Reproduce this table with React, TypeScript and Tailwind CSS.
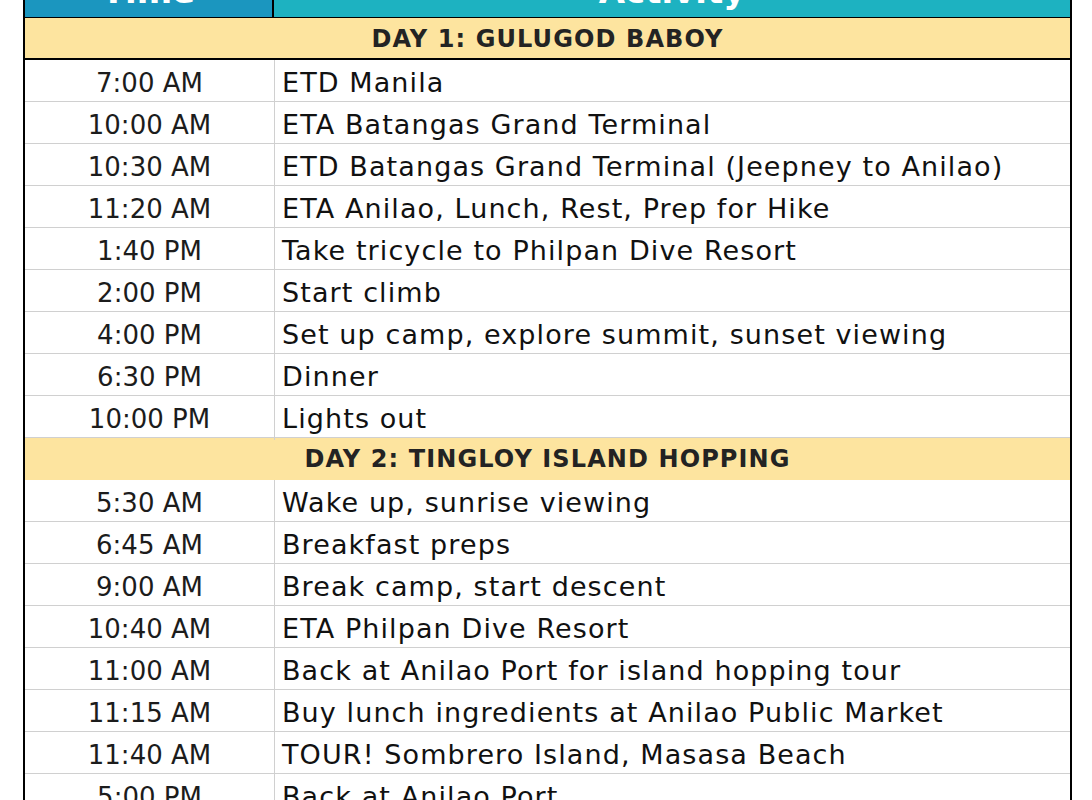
const day1 = [
  ['7:00 AM', 'ETD Manila'],
  ['10:00 AM', 'ETA Batangas Grand Terminal'],
  ['10:30 AM', 'ETD Batangas Grand Terminal (Jeepney to Anilao)'],
  ['11:20 AM', 'ETA Anilao, Lunch, Rest, Prep for Hike'],
  ['1:40 PM', 'Take tricycle to Philpan Dive Resort'],
  ['2:00 PM', 'Start climb'],
  ['4:00 PM', 'Set up camp, explore summit, sunset viewing'],
  ['6:30 PM', 'Dinner'],
  ['10:00 PM', 'Lights out'],
];

const day2 = [
  ['5:30 AM', 'Wake up, sunrise viewing'],
  ['6:45 AM', 'Breakfast preps'],
  ['9:00 AM', 'Break camp, start descent'],
  ['10:40 AM', 'ETA Philpan Dive Resort'],
  ['11:00 AM', 'Back at Anilao Port for island hopping tour'],
  ['11:15 AM', 'Buy lunch ingredients at Anilao Public Market'],
  ['11:40 AM', 'TOUR! Sombrero Island, Masasa Beach'],
  ['5:00 PM', 'Back at Anilao Port'],
];

function Row({ time, activity }: { time: string; activity: string }) {
  return (
    <div className="grid grid-cols-[250px_1fr] h-[42px] border-b border-[#d0d0d0]">
      <div className="flex items-center justify-center pt-[3px] border-r border-[#d0d0d0] text-[26px] text-[#1c1c1c]">
        {time}
      </div>
      <div className="flex items-center pt-[3px] pl-[7px] text-[27px] tracking-[1.1px] text-[#111] whitespace-nowrap">
        {activity}
      </div>
    </div>
  );
}

export default function App() {
  return (
    <div className="bg-white min-h-screen overflow-hidden" style={{ fontFamily: '"DejaVu Sans", sans-serif' }}>
      <div className="ml-[23px] w-[1049px] border-x-2 border-black -mt-[34px]">
        {/* Header */}
        <div className="grid grid-cols-[249px_1fr] h-[52px] border-b-2 border-black">
          <div className="flex items-center justify-center bg-[#1b96bf] border-r-2 border-black text-white text-[34px] font-bold">
            Time
          </div>
          <div className="flex items-center justify-center bg-[#1db2c1] text-white text-[34px] font-bold">
            Activity
          </div>
        </div>

        {/* Day 1 */}
        <div className="h-[42px] bg-[#fde49f] border-b-2 border-black flex items-center justify-center pt-[2px] text-[24px] tracking-[1.1px] font-bold text-[#232323]">
          DAY 1: GULUGOD BABOY
        </div>
        {day1.map(([t, a]) => (
          <Row key={t + a} time={t} activity={a} />
        ))}

        {/* Day 2 */}
        <div className="h-[42px] bg-[#fde49f] flex items-center justify-center text-[24px] tracking-[1.1px] font-bold text-[#232323]">
          DAY 2: TINGLOY ISLAND HOPPING
        </div>
        {day2.map(([t, a]) => (
          <Row key={t + a} time={t} activity={a} />
        ))}
      </div>
    </div>
  );
}
